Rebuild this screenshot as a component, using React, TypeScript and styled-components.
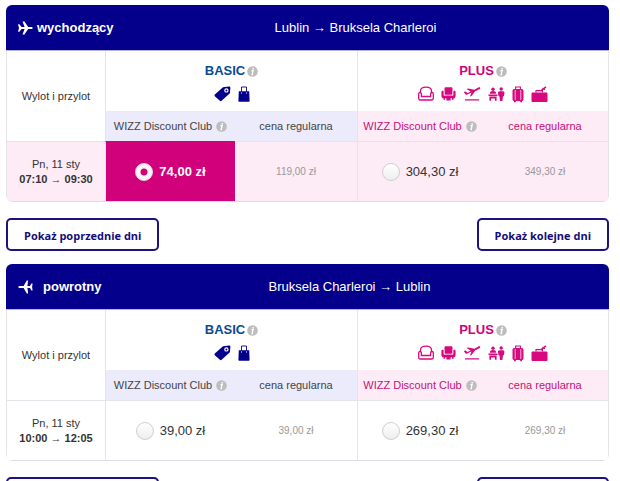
import React, { useState } from 'react';
import styled, { createGlobalStyle, css } from 'styled-components';

const NAVY = '#04008c';
const PINK = '#d1007b';
const LINE = '#e6e4ea';
const PALE_PINK = '#fdebf6';
const PALE_BLUE = '#ebebfc';

type Tone = 'basic' | 'plus';

const GlobalStyle = createGlobalStyle`
  * { box-sizing: border-box; }
  body {
    margin: 0;
    background: #fff;
    color: #333;
    font-family: "Liberation Sans", Arial, sans-serif;
    font-size: 11px;
    line-height: 15px;
  }
`;

const Page = styled.main`
  padding: 5px 11px 0 6px;
  height: 100vh;
  overflow: hidden;
`;

const Card = styled.section`
  border-radius: 6px;
  overflow: hidden;
`;

const CardHeader = styled.header<{ $lead: number }>`
  display: grid;
  grid-template-columns: ${(p) => p.$lead}px 1fr;
  align-items: center;
  height: 45px;
  background: ${NAVY};
  color: #fff;
`;

const Direction = styled.h2<{ $gap: number }>`
  display: flex;
  align-items: center;
  gap: ${(p) => p.$gap}px;
  margin: 0;
  padding-left: 12px;
  font-size: 13px;
  line-height: 18px;
  white-space: nowrap;
`;

const Route = styled.p`
  margin: 0;
  font-size: 13px;
  line-height: 18px;
  text-align: center;
`;

const FareTable = styled.table`
  width: 100%;
  table-layout: fixed;
  border: 1px solid ${LINE};
  border-top-color: #b3b1dc;
  border-bottom-color: #dedce2;
  border-radius: 0 0 6px 6px;
  border-collapse: separate;
  border-spacing: 0;
  text-align: center;
`;

const Col = styled.col<{ $width: number }>`
  width: ${(p) => p.$width}px;
`;

const divider = css`
  border-left: 1px solid ${LINE};
`;

const TimesHeading = styled.th`
  padding: 0;
  font-weight: 400;
  vertical-align: middle;
`;

const TierCell = styled.th`
  ${divider}
  height: 60px;
  padding: 3px 0 0;
  vertical-align: middle;
`;

const TierTitle = styled.div<{ $tone: Tone }>`
  display: flex;
  justify-content: center;
  align-items: center;
  gap: 2px;
  color: ${(p) => (p.$tone === 'plus' ? PINK : '#0a4a94')};
  font-size: 13px;
  line-height: 18px;
`;

const IconRow = styled.div<{ $tone: Tone }>`
  display: flex;
  justify-content: center;
  align-items: center;
  gap: 7px;
  height: 18px;
  margin-top: 5px;
  color: ${(p) => (p.$tone === 'plus' ? '#d8087f' : NAVY)};
`;

const ColumnLabel = styled.th<{ $tone: Tone; $first?: boolean }>`
  ${(p) => p.$first && divider}
  height: 30px;
  padding: 0;
  background: ${(p) => (p.$tone === 'plus' ? PALE_PINK : PALE_BLUE)};
  color: ${(p) => (p.$tone === 'plus' ? '#c8107c' : '#444')};
  font-weight: 400;
`;

const LabelLine = styled.span`
  display: flex;
  justify-content: center;
  align-items: center;
  gap: 4px;
  white-space: nowrap;
`;

const FlightRow = styled.tr<{ $active: boolean }>`
  background: ${(p) => (p.$active ? PALE_PINK : '#fff')};
`;

const TimesCell = styled.th`
  height: 60px;
  padding: 0;
  border-top: 1px solid ${LINE};
  font-weight: 400;
`;

const Times = styled.strong`
  display: block;
`;

const PriceCell = styled.td<{ $first?: boolean; $selected?: boolean }>`
  ${(p) => p.$first && divider}
  padding: 0;
  border-top: 1px solid ${LINE};
  ${(p) =>
    p.$selected &&
    css`
      border-top-color: ${PINK};
      background: ${PINK};
      color: #fff;
      font-weight: 700;
    `}
`;

const PriceLabel = styled.label`
  display: flex;
  justify-content: center;
  align-items: center;
  gap: 6px;
  font-size: 13px;
  line-height: 18px;
  cursor: pointer;
`;

const Radio = styled.input`
  appearance: none;
  flex: none;
  width: 18px;
  height: 18px;
  margin: 0;
  border: 1px solid #cfcfcf;
  border-radius: 50%;
  background: linear-gradient(#fff, #eee);

  &:checked {
    border-color: #f3dbe9;
    background: radial-gradient(circle, ${PINK} 0 3px, #f7f7f7 4px);
  }
`;

const RegularPrice = styled.span`
  color: #999;
  font-size: 10px;
`;

const Pager = styled.nav`
  display: flex;
  justify-content: space-between;
  padding: 16px 0 13px;
`;

const PagerButton = styled.button`
  height: 33px;
  padding: 2px 16px 0;
  border: 2px solid #1c1283;
  border-radius: 5px;
  background: #fff;
  color: #150c78;
  font: 700 11px/16px "Open Sans", sans-serif;
  cursor: pointer;
`;

const Icon = styled.svg`
  flex: none;
`;

function InfoIcon() {
  return (
    <Icon width="11" height="11" viewBox="0 0 11 11" aria-hidden="true">
      <circle cx="5.5" cy="5.5" r="5.3" fill="#bdbdbd" />
      <circle cx="6.2" cy="2.8" r="0.9" fill="#fff" />
      <path d="M4.4 4.7h1.7L5.1 8.6h1" fill="none" stroke="#fff" strokeWidth="1.3" />
    </Icon>
  );
}

function PlaneRight() {
  return (
    <Icon width="15" height="14" viewBox="0 0 15 14" fill="#fff" aria-hidden="true">
      <path d="M0 3.2h1.4L3.6 6h3L4.5.4h1.9L10.2 6H13c1.1 0 1.8.5 1.8 1s-.7 1-1.8 1h-2.8l-3.8 5.6H4.5L6.6 8h-3l-2.2 2.8H0L1 7z" />
    </Icon>
  );
}

function PlaneLeft() {
  return (
    <Icon width="15" height="14" viewBox="0 0 15 14" fill="#fff" aria-hidden="true">
      <path d="M.3 7c0-.6.8-1.1 2-1.1h3.3L8.8.4h1.4L9.4 5.9H12l1.4-2.5h1.2L14.1 7l.5 3.6h-1.2L12 8.1H9.4l.8 5.5H8.8L5.6 8.1H2.3C1.1 8.1.3 7.6.3 7z" />
    </Icon>
  );
}

function TagIcon() {
  return (
    <Icon width="17" height="16" viewBox="0 0 17 16" fill="currentColor" aria-hidden="true">
      <path d="M9 1.2 15 .6c.9 0 1.4.5 1.4 1.4l-.5 5.2-8.300 7.600c-.6.5-1.200.5-1.700 0L.8 10.200c-.5-.5-.5-1.100 0-1.600z" />
      <circle cx="12.4" cy="4.4" r="1.6" fill={NAVY} stroke="#fff" strokeWidth="1.2" />
    </Icon>
  );
}

function BagIcon() {
  return (
    <Icon width="12" height="16" viewBox="0 0 12 16" fill="currentColor" aria-hidden="true">
      <path d="M.8 5.2h10.4l.4 9.800c0 .5-.3.8-.8.8H1.200c-.5 0-.8-.3-.8-.8z" />
      <path d="M3.5 6V1h5v5" fill="none" stroke="currentColor" strokeWidth=".9" />
      <path d="M3 6.4h1v1H3zM8 6.4h1v1H8z" fill="#fff" />
    </Icon>
  );
}

function SofaIcon() {
  return (
    <Icon width="16" height="16" viewBox="0 0 16 16" fill="none" stroke="currentColor" strokeWidth="1.3" aria-hidden="true">
      <path d="M2.5 6.6V5c0-2.7 1.5-3.9 5.5-3.9S13.5 2.300 13.500 5v1.600" />
      <path d="M3.4 10.500V8c0-1-.6-1.500-1.400-1.500S.7 7.100.7 8v4.600c0 .9.5 1.400 1.300 1.400h12c.8 0 1.300-.5 1.300-1.400V8c0-.9-.5-1.500-1.300-1.500s-1.400.5-1.400 1.500v2.500z" />
    </Icon>
  );
}

function ArmchairIcon() {
  return (
    <Icon width="15" height="16" viewBox="0 0 15 16" fill="currentColor" aria-hidden="true">
      <path d="M5 1.2h5c.9 0 1.5.5 1.5 1.4v6.2h-8V2.6c0-.9.6-1.400 1.500-1.400z" />
      <path d="M1.8 4.800c.7 0 1 .4 1 1v3.700h9.400V5.800c0-.6.3-1 1-1 .8 0 1.400.5 1.400 1.300v3.600c0 1.600-.7 2.500-2.100 2.600v1.400h-1.600v-1.400H9.600v2.300H5.400v-2.300H4.100v1.400H2.500v-1.400C1.100 12.200.4 11.300.4 9.700V6.100c0-.8.6-1.300 1.400-1.300z" />
      <path d="M3.1 5v4.100h1.300M11.900 5v4.100h-1.300" fill="none" stroke="#fff" strokeWidth=".5" />
    </Icon>
  );
}

function TakeoffIcon() {
  return (
    <Icon width="18" height="16" viewBox="0 0 18 16" fill="currentColor" aria-hidden="true">
      <path d="M2 13.2h14.2v1.3H2z" />
      <path d="M.8 6.1 2.4 5.6l2.2 1.3 3.1-1.4-4.2-2.4 1.7-.7 6.2 1.4 3.6-2.1c1-.5 1.9-.5 2.2 0 .3.6-.1 1.1-1 1.600l-4.200 2.100-3.500 4.700-1.500.5 1.500-4.100-4.400 2.100c-.8.3-1.300.2-1.700-.3z" />
    </Icon>
  );
}

function CheckInIcon() {
  return (
    <Icon width="17" height="16" viewBox="0 0 17 16" fill="currentColor" aria-hidden="true">
      <circle cx="5" cy="3.2" r="1.7" />
      <path d="M1.8 7.8c0-2 1.300-2.700 3.200-2.700s3.200.7 3.200 2.700z" />
      <path d="M.5 8.500h9V10h-9zM1.400 10.600h7.200v4.200H6.900v-2.200H3.100v2.200H1.400z" />
      <circle cx="13.2" cy="3" r="1.7" />
      <path d="M11.600 5.200h3.200c1.100 0 1.700.7 1.600 1.800l-.5 3.200H15l-.6 4.700H12l-.6-4.700h-.9L10 7c-.1-1.100.5-1.800 1.600-1.800z" />
    </Icon>
  );
}

function SuitcaseIcon() {
  return (
    <Icon width="12" height="17" viewBox="0 0 12 17" fill="currentColor" aria-hidden="true">
      <path d="M3.6 3.500V1h4.800v2.500" fill="none" stroke="currentColor" strokeWidth="1.1" />
      <path d="M2.300 3h7.400c1.100 0 1.800.7 1.800 1.800v8.400c0 1.100-.7 1.800-1.800 1.800H2.300c-1.100 0-1.800-.7-1.800-1.800V4.800C.5 3.700 1.200 3 2.300 3zM2 15h1.800v1.200H2zM8.200 15H10v1.200H8.200z" />
      <path d="M3.200 4v10M8.800 4v10" stroke="#fff" strokeWidth=".7" />
    </Icon>
  );
}

function HoldBagIcon() {
  return (
    <Icon width="17" height="17" viewBox="0 0 17 17" fill="currentColor" aria-hidden="true">
      <path d="M1.800 6.400h13.400c.8 0 1.300.5 1.300 1.300v7c0 .8-.5 1.300-1.300 1.300H1.800c-.8 0-1.300-.5-1.300-1.300v-7c0-.8.5-1.300 1.300-1.300z" />
      <path d="M5 6.600V4.600h6.400v2" fill="none" stroke="currentColor" strokeWidth="1.1" />
      <path d="M9.800 4.800 15 .8" stroke="currentColor" strokeWidth="1.5" />
      <path d="m11.400 2.200 2.600 1.600" stroke="currentColor" strokeWidth="1" />
    </Icon>
  );
}

interface Flight {
  id: string;
  direction: string;
  route: string;
  times: string;
  prices: { tone: Tone; club: string; regular: string }[];
}

const FLIGHTS: Flight[] = [
  {
    id: 'outbound',
    direction: 'wychodzący',
    route: 'Lublin → Bruksela Charleroi',
    times: '07:10 → 09:30',
    prices: [
      { tone: 'basic', club: '74,00 zł', regular: '119,00 zł' },
      { tone: 'plus', club: '304,30 zł', regular: '349,30 zł' },
    ],
  },
  {
    id: 'return',
    direction: 'powrotny',
    route: 'Bruksela Charleroi → Lublin',
    times: '10:00 → 12:05',
    prices: [
      { tone: 'basic', club: '39,00 zł', regular: '39,00 zł' },
      { tone: 'plus', club: '269,30 zł', regular: '269,30 zł' },
    ],
  },
];

const TONES: Tone[] = ['basic', 'plus'];

function FlightCard({ flight, initial }: { flight: Flight; initial: Tone | null }) {
  const [selected, setSelected] = useState<Tone | null>(initial);
  const outbound = flight.id === 'outbound';
  return (
    <Card>
      <CardHeader $lead={outbound ? 96 : 84}>
        <Direction $gap={outbound ? 4 : 10}>
          {outbound ? <PlaneRight /> : <PlaneLeft />}
          {flight.direction}
        </Direction>
        <Route>{flight.route}</Route>
      </CardHeader>
      <FareTable>
        <colgroup>
          <Col $width={98} />
          <Col $width={130} />
          <Col $width={122} />
          <Col $width={125} />
          <Col $width={126} />
        </colgroup>
        <thead>
          <tr>
            <TimesHeading rowSpan={2} scope="col">Wylot i przylot</TimesHeading>
            <TierCell colSpan={2} scope="colgroup">
              <TierTitle $tone="basic">BASIC<InfoIcon /></TierTitle>
              <IconRow $tone="basic"><TagIcon /><BagIcon /></IconRow>
            </TierCell>
            <TierCell colSpan={2} scope="colgroup">
              <TierTitle $tone="plus">PLUS<InfoIcon /></TierTitle>
              <IconRow $tone="plus">
                <SofaIcon /><ArmchairIcon /><TakeoffIcon /><CheckInIcon /><SuitcaseIcon /><HoldBagIcon />
              </IconRow>
            </TierCell>
          </tr>
          <tr>
            {TONES.map((tone) => (
              <React.Fragment key={tone}>
                <ColumnLabel $tone={tone} $first scope="col">
                  <LabelLine>WIZZ Discount Club<InfoIcon /></LabelLine>
                </ColumnLabel>
                <ColumnLabel $tone={tone} scope="col">cena regularna</ColumnLabel>
              </React.Fragment>
            ))}
          </tr>
        </thead>
        <tbody>
          <FlightRow $active={selected !== null}>
            <TimesCell scope="row">
              Pn, 11 sty
              <Times>{flight.times}</Times>
            </TimesCell>
            {flight.prices.map((price) => (
              <React.Fragment key={price.tone}>
                <PriceCell $first $selected={selected === price.tone}>
                  <PriceLabel>
                    <Radio
                      type="radio"
                      name={flight.id}
                      checked={selected === price.tone}
                      onChange={() => setSelected(price.tone)}
                    />
                    {price.club}
                  </PriceLabel>
                </PriceCell>
                <PriceCell>
                  <RegularPrice>{price.regular}</RegularPrice>
                </PriceCell>
              </React.Fragment>
            ))}
          </FlightRow>
        </tbody>
      </FareTable>
    </Card>
  );
}

function DayPager() {
  return (
    <Pager>
      <PagerButton type="button">Pokaż poprzednie dni</PagerButton>
      <PagerButton type="button">Pokaż kolejne dni</PagerButton>
    </Pager>
  );
}

export default function App() {
  return (
    <>
      <GlobalStyle />
      <Page>
        <FlightCard flight={FLIGHTS[0]} initial="basic" />
        <DayPager />
        <FlightCard flight={FLIGHTS[1]} initial={null} />
        <DayPager />
      </Page>
    </>
  );
}
